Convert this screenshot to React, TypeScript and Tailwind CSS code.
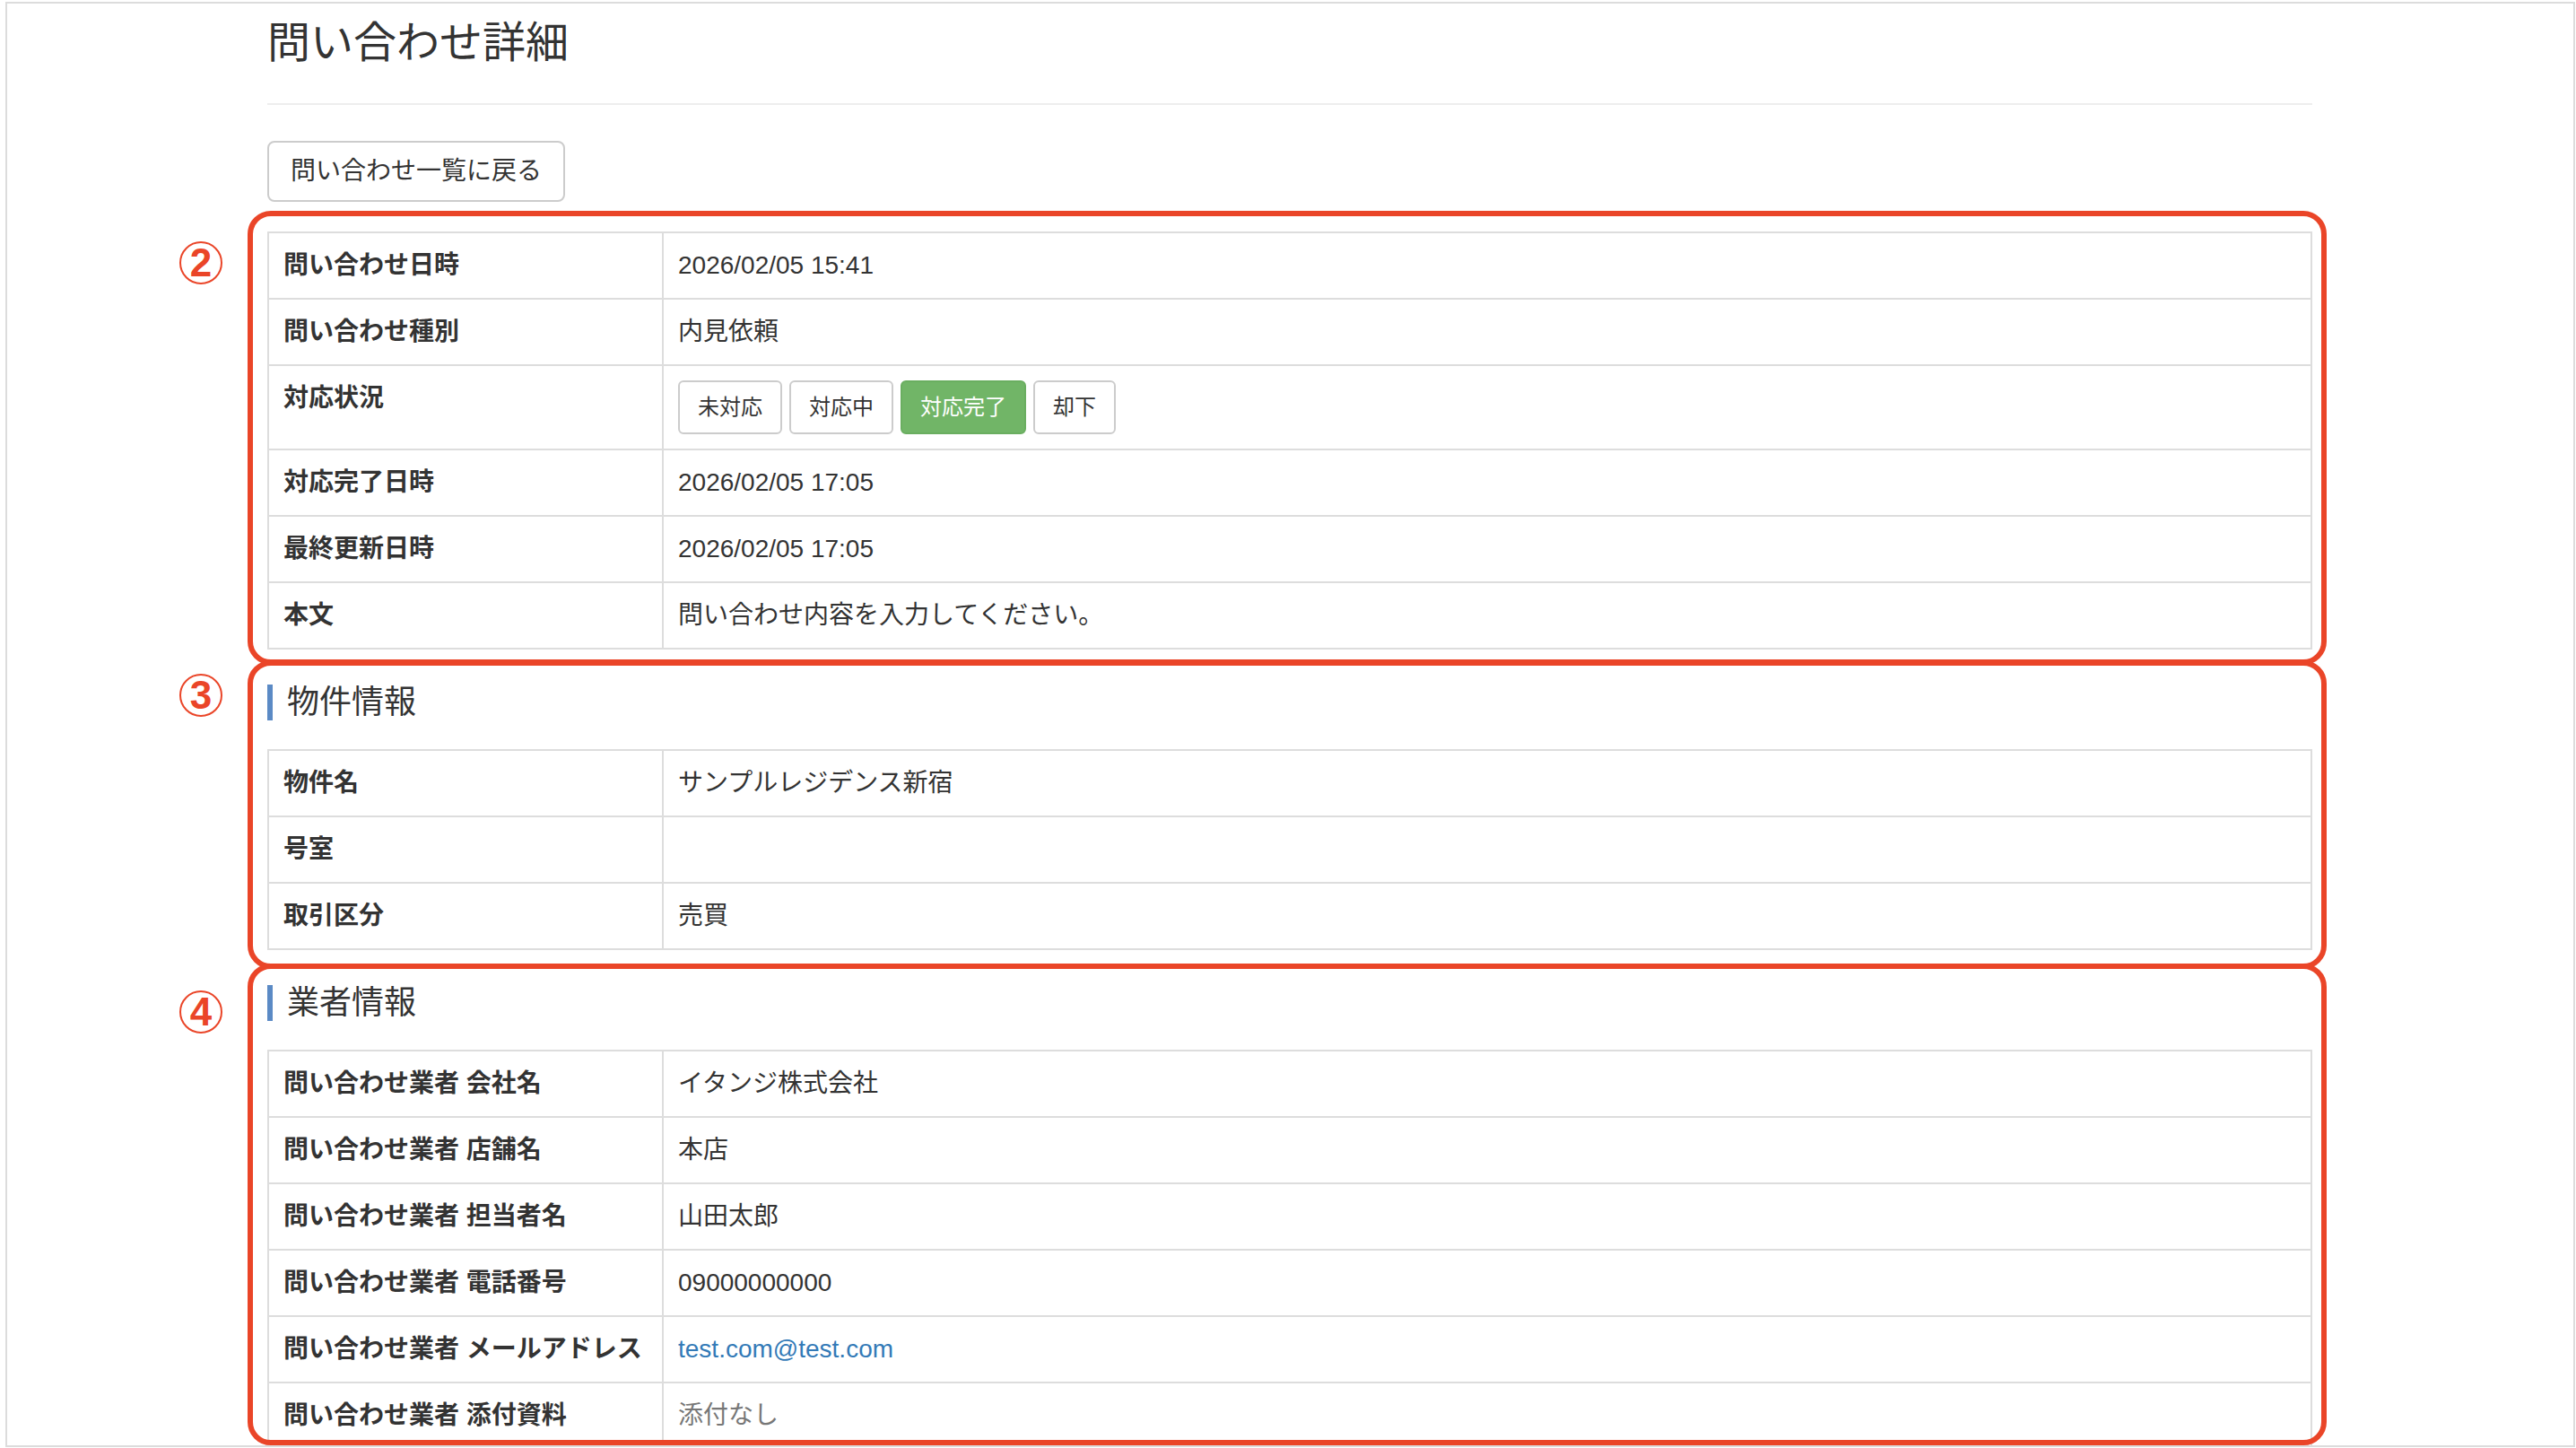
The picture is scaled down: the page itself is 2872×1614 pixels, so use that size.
import type { ReactNode } from 'react'

type Row = { label: string; value: ReactNode }

const statuses = ['未対応', '対応中', '対応完了', '却下']

function StatusButtons() {
  return (
    <div className="flex gap-[8px]">
      {statuses.map((s) => {
        const active = s === '対応完了'
        return (
          <button
            key={s}
            className={
              active
                ? 'rounded-[6px] border-2 border-[#6aae60] bg-[#71b567] px-[20px] py-[10px] text-[24px] leading-[36px] text-white'
                : 'rounded-[6px] border-2 border-[#ccc] bg-white px-[20px] py-[10px] text-[24px] leading-[36px] text-[#333]'
            }
          >
            {s}
          </button>
        )
      })}
    </div>
  )
}

function InfoTable({ rows }: { rows: Row[] }) {
  return (
    <div className="flex flex-col border-2 border-[#ddd]">
      {rows.map((row, i) => (
        <div key={row.label} className={i > 0 ? 'flex border-t-2 border-[#ddd]' : 'flex'}>
          <div className="w-[440px] shrink-0 border-r-2 border-[#ddd] px-[16px] pt-[16px] pb-[16px] font-bold leading-[40px]">
            {row.label}
          </div>
          <div className="min-h-[72px] flex-1 px-[16px] pt-[16px] pb-[16px] leading-[40px]">{row.value}</div>
        </div>
      ))}
    </div>
  )
}

function Marker({ n, className }: { n: string; className: string }) {
  return (
    <div
      className={`absolute -left-[98px] flex h-[48px] w-[48px] items-center justify-center rounded-full border-2 border-[#ea4528] text-[44px] leading-none font-bold text-[#ea4528] ${className}`}
    >
      {n}
    </div>
  )
}

// hand-drawn red annotation frame laid over a section
function Annotation({ className }: { className: string }) {
  return (
    <div
      className={`pointer-events-none absolute -right-[16px] -left-[22px] rounded-[26px] border-[6px] border-[#ea4528] ${className}`}
    />
  )
}

function SectionTitle({ children }: { children: ReactNode }) {
  return (
    <h4 className="border-l-[6px] border-[#5b8ac5] pl-[16px] text-[36px] leading-[40px] font-normal">{children}</h4>
  )
}

const inquiryRows: Row[] = [
  { label: '問い合わせ日時', value: '2026/02/05 15:41' },
  { label: '問い合わせ種別', value: '内見依頼' },
  { label: '対応状況', value: <StatusButtons /> },
  { label: '対応完了日時', value: '2026/02/05 17:05' },
  { label: '最終更新日時', value: '2026/02/05 17:05' },
  { label: '本文', value: '問い合わせ内容を入力してください。' },
]

const propertyRows: Row[] = [
  { label: '物件名', value: 'サンプルレジデンス新宿' },
  { label: '号室', value: '' },
  { label: '取引区分', value: '売買' },
]

const companyRows: Row[] = [
  { label: '問い合わせ業者 会社名', value: 'イタンジ株式会社' },
  { label: '問い合わせ業者 店舗名', value: '本店' },
  { label: '問い合わせ業者 担当者名', value: '山田太郎' },
  { label: '問い合わせ業者 電話番号', value: '09000000000' },
  {
    label: '問い合わせ業者 メールアドレス',
    value: <a className="text-[#337ab7]">test.com@test.com</a>,
  },
  { label: '問い合わせ業者 添付資料', value: <span className="text-[#777]">添付なし</span> },
]

export default function App() {
  return (
    <div className="h-[1614px] w-[2872px] overflow-hidden bg-white pt-[2px] pr-[1px] pb-[1px] pl-[6px] font-['Liberation_Sans','Noto_Sans_CJK_JP',sans-serif] text-[28px] text-[#333]">
      <div className="h-full overflow-hidden border-2 border-[#dcdcdc]">
        <div className="ml-[290px] flex w-[2280px] flex-col pt-[18px]">
          <div className="flex flex-col gap-[41px] border-b-2 border-[#eee]">
            <h3 className="text-[48px] leading-[52px] font-normal">問い合わせ詳細</h3>
            <div />
          </div>

          <div className="flex pt-[40px] pb-[33px]">
            <button className="rounded-[8px] border-2 border-[#ccc] bg-white px-[24px] py-[12px] text-[28px] leading-[40px] text-[#333]">
              問い合わせ一覧に戻る
            </button>
          </div>

          <div className="flex flex-col gap-[39px]">
            <section className="relative">
              <InfoTable rows={inquiryRows} />
              <Annotation className="-top-[23px] -bottom-[17px]" />
              <Marker n="2" className="top-[11px]" />
            </section>

            <section className="relative flex flex-col gap-[32px]">
              <SectionTitle>物件情報</SectionTitle>
              <InfoTable rows={propertyRows} />
              <Annotation className="-top-[27px] -bottom-[21px]" />
              <Marker n="3" className="-top-[12px]" />
            </section>

            <section className="relative flex flex-col gap-[32px]">
              <SectionTitle>業者情報</SectionTitle>
              <InfoTable rows={companyRows} />
              <Annotation className="-top-[24px] bottom-[5px]" />
              <Marker n="4" className="top-[6px]" />
            </section>
          </div>
        </div>
      </div>
    </div>
  )
}
